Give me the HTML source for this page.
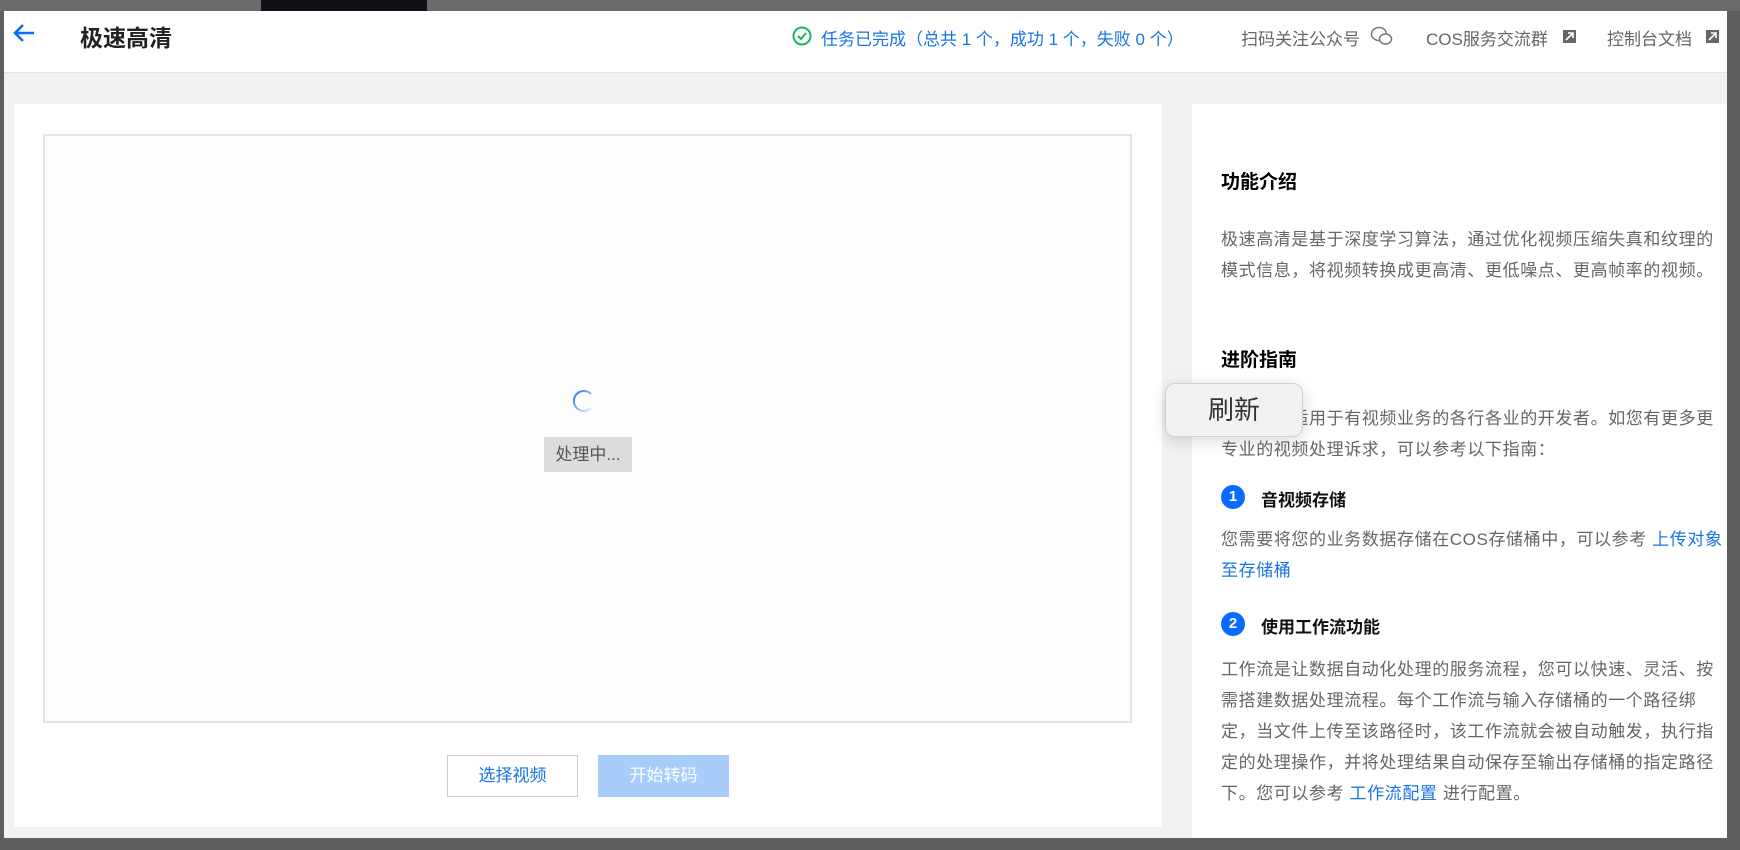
<!DOCTYPE html>
<html><head><meta charset="utf-8"><style>
*{margin:0;padding:0;box-sizing:border-box}
body{width:1740px;height:850px;overflow:hidden;background:#5e5e5e;font-family:"Liberation Sans","Noto Sans CJK SC",sans-serif;position:relative}
.a{position:absolute}
.txt{color:#666;font-size:17px;line-height:31px;letter-spacing:0.6px}
.h{color:#000;font-weight:bold;font-size:19px}
.blue{color:#1a73e8}
.num{width:24px;height:24px;border-radius:50%;background:#0a6cff;color:#fff;font-size:15px;font-weight:bold;text-align:center;line-height:24px}
</style></head><body>
<div class="a" style="left:0;top:0;width:1740px;height:11px;background:#6a6a6a"></div>
<div class="a" style="left:261px;top:0;width:166px;height:11px;background:#0e1015"></div>
<div class="a" style="left:4px;top:11px;width:1723px;height:827px;background:#f2f2f2"></div>
<div class="a" style="left:4px;top:11px;width:1723px;height:62px;background:#fff;border-bottom:1px solid #e2e2e2"></div>
<svg class="a" style="left:12px;top:22px" width="26" height="22" viewBox="0 0 26 22"><path d="M22 11H4M11 3L3 11l8 8" stroke="#0a6cff" stroke-width="2.6" fill="none"/></svg>
<div class="a" style="left:80px;top:19px;font-size:23px;font-weight:bold;color:#222">极速高清</div>
<svg class="a" style="left:792px;top:26px" width="20" height="20" viewBox="0 0 20 20"><circle cx="10" cy="10" r="8.5" stroke="#1fb35a" stroke-width="2" fill="none"/><path d="M6 10l3 3 5-6" stroke="#1fb35a" stroke-width="2" fill="none"/></svg>
<div class="a" style="left:821px;top:25px;font-size:17px;color:#1a73e8">任务已完成（总共 1 个，成功 1 个，失败 0 个）</div>
<div class="a" style="left:1241px;top:25px;font-size:17px;color:#666">扫码关注公众号</div>
<svg class="a" style="left:1370px;top:26px" width="24" height="20" viewBox="0 0 24 20"><ellipse cx="9" cy="8" rx="7.5" ry="6.5" stroke="#777" stroke-width="1.5" fill="#fff"/><ellipse cx="15.5" cy="13" rx="6" ry="5" stroke="#777" stroke-width="1.5" fill="#fff"/></svg>
<div class="a" style="left:1426px;top:25px;font-size:17px;color:#666">COS服务交流群</div>
<svg class="a" style="left:1562px;top:29px" width="15" height="15" viewBox="0 0 15 15"><path d="M1 1h13v13H1z" fill="#666"/><path d="M4 11l6-6M6 4h5v5" stroke="#fff" stroke-width="1.6" fill="none"/></svg>
<div class="a" style="left:1607px;top:25px;font-size:17px;color:#666">控制台文档</div>
<svg class="a" style="left:1705px;top:29px" width="15" height="15" viewBox="0 0 15 15"><path d="M1 1h13v13H1z" fill="#666"/><path d="M4 11l6-6M6 4h5v5" stroke="#fff" stroke-width="1.6" fill="none"/></svg>

<div class="a" style="left:14px;top:104px;width:1148px;height:723px;background:#fff"></div>
<div class="a" style="left:43px;top:134px;width:1089px;height:589px;border:2px solid #e4e4e4;background:#fdfdfd"></div>
<svg class="a" style="left:572px;top:389px" width="24" height="24" viewBox="0 0 24 24"><defs><linearGradient id="g" x1="0" y1="0" x2="1" y2="1"><stop offset="0" stop-color="#1a73e8"/><stop offset="1" stop-color="#e6f0ff"/></linearGradient></defs><path d="M19 5A10 10 0 1 0 19 19" stroke="url(#g)" stroke-width="2" fill="none"/></svg>
<div class="a" style="left:544px;top:437px;width:88px;height:35px;background:#dcdcdc;color:#555;font-size:17px;line-height:35px;text-align:center">处理中...</div>
<div class="a" style="left:447px;top:755px;width:131px;height:42px;border:1px solid #ccc;color:#1a73e8;font-size:17px;line-height:40px;text-align:center">选择视频</div>
<div class="a" style="left:598px;top:755px;width:131px;height:42px;background:#a9cdfb;color:#fff;font-size:17px;line-height:42px;text-align:center">开始转码</div>

<div class="a" style="left:1192px;top:104px;width:535px;height:734px;background:#fff"></div>
<div class="a h" style="left:1221px;top:167px">功能介绍</div>
<div class="a txt" style="left:1221px;top:224px;width:499px">极速高清是基于深度学习算法，通过优化视频压缩失真和纹理的模式信息，将视频转换成更高清、更低噪点、更高帧率的视频。</div>
<div class="a h" style="left:1221px;top:345px">进阶指南</div>
<div class="a txt" style="left:1221px;top:403px;width:499px">极速高清适用于有视频业务的各行各业的开发者。如您有更多更专业的视频处理诉求，可以参考以下指南：</div>
<div class="a num" style="left:1221px;top:485px">1</div>
<div class="a" style="left:1261px;top:486px;font-size:17px;font-weight:bold;color:#111">音视频存储</div>
<div class="a txt" style="left:1221px;top:524px;width:520px">您需要将您的业务数据存储在COS存储桶中，可以参考 <span class="blue">上传对象<br>至存储桶</span></div>
<div class="a num" style="left:1221px;top:612px">2</div>
<div class="a" style="left:1261px;top:613px;font-size:17px;font-weight:bold;color:#111">使用工作流功能</div>
<div class="a txt" style="left:1221px;top:654px;width:499px">工作流是让数据自动化处理的服务流程，您可以快速、灵活、按需搭建数据处理流程。每个工作流与输入存储桶的一个路径绑定，当文件上传至该路径时，该工作流就会被自动触发，执行指定的处理操作，并将处理结果自动保存至输出存储桶的指定路径下。您可以参考 <span class="blue">工作流配置</span> 进行配置。</div>

<div class="a" style="left:1165px;top:383px;width:138px;height:54px;background:#f2f2f2;border:1px solid #d0d0d0;border-radius:10px;box-shadow:0 4px 16px rgba(0,0,0,.15);font-size:26px;color:#333;text-align:center;line-height:52px">刷新</div>
</body></html>
